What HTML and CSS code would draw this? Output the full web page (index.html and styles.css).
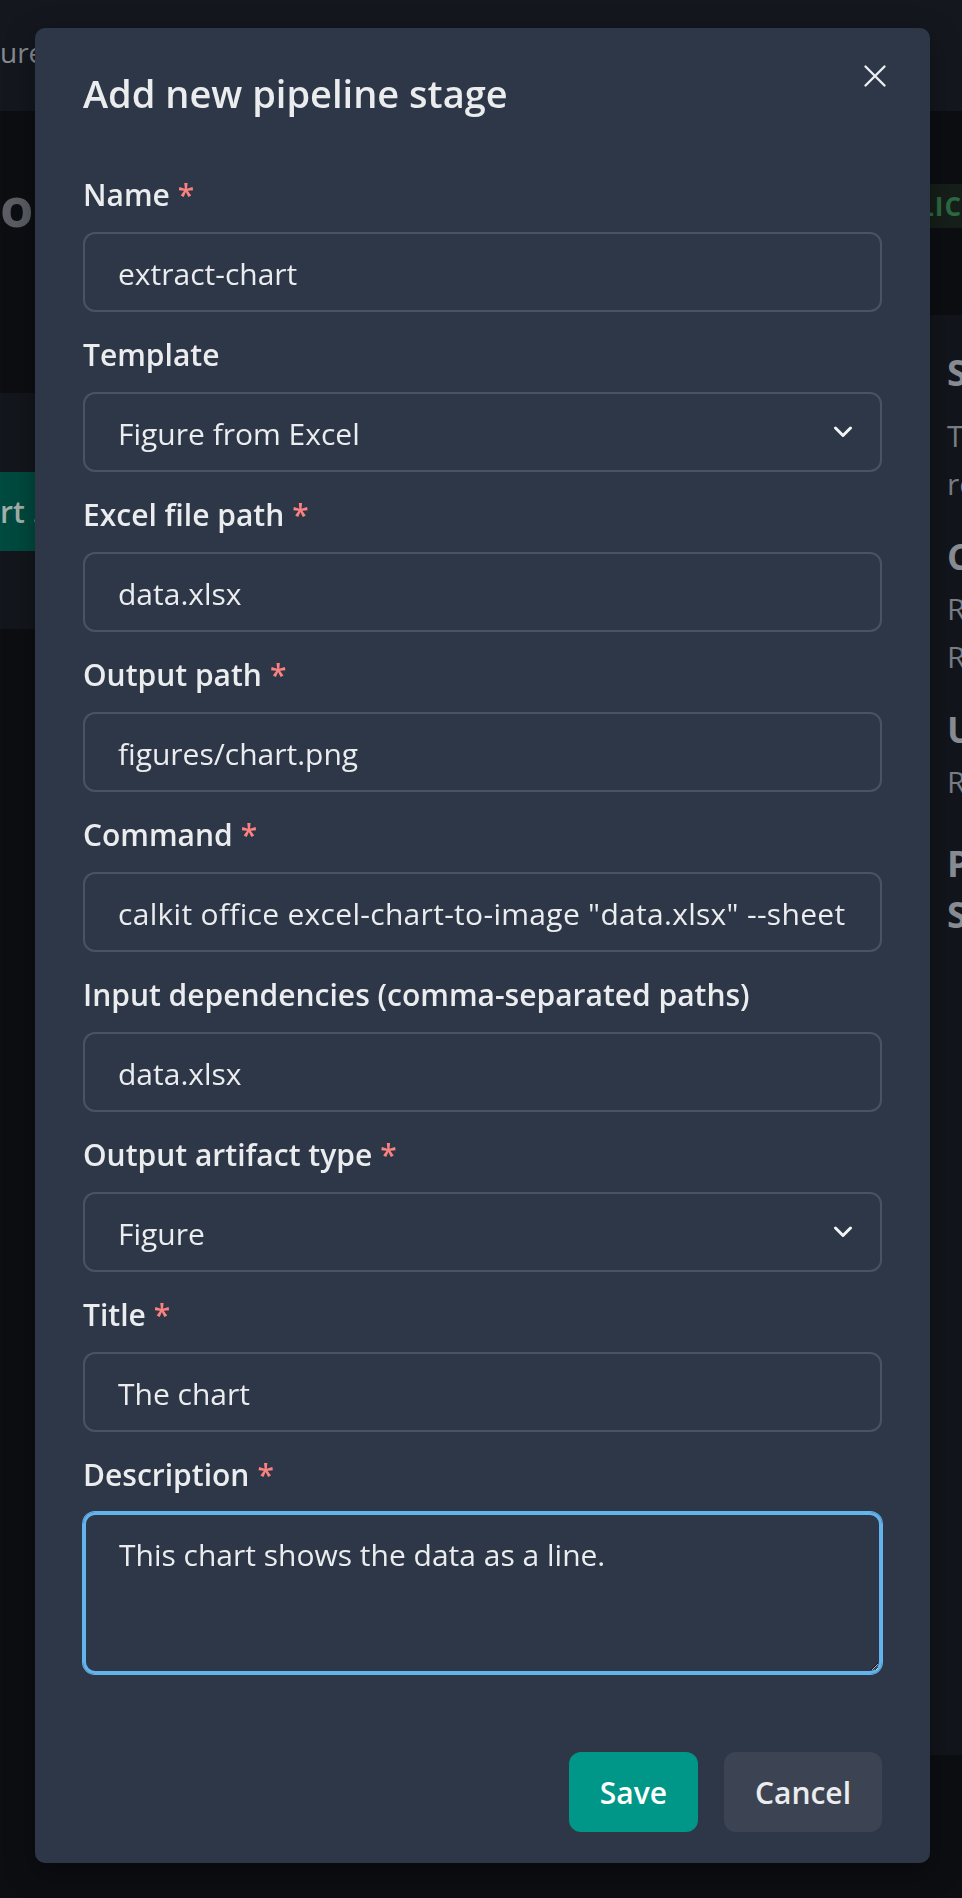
FILE: index.html
```html
<!DOCTYPE html>
<html lang="en">
<head>
<meta charset="utf-8">
<title>Add new pipeline stage</title>
<link rel="stylesheet" href="styles.css">
</head>
<body>
<div class="page">
  <header class="topbar"><span class="crumb">ure</span></header>
  <div class="titlerow">
    <h1 class="page-title">or</h1>
    <span class="badge">PUBLIC</span>
  </div>
  <div class="content">
    <div class="main-col">
      <div class="card">
        <button class="bg-btn" type="button">rt ...</button>
      </div>
    </div>
    <aside class="sidebar">
      <h3 class="side-h side-h-first">Stage details</h3>
      <p class="side-p">The pipeline is<br>recorded in calkit.yaml</p>
      <h3 class="side-h">Commands</h3>
      <p class="side-p">Run the pipeline<br>Run a single stage</p>
      <h3 class="side-h">Usage</h3>
      <p class="side-p side-p-last">Run locally</p>
      <h3 class="side-h side-h-last">Pipeline<br>Stages</h3>
    </aside>
  </div>
</div>

<div class="overlay">
  <div class="modal" role="dialog" aria-labelledby="modal-title">
    <header class="modal-header">
      <h2 class="modal-title" id="modal-title">Add new pipeline stage</h2>
      <button class="close" type="button" aria-label="Close">
        <svg width="24" height="24" viewBox="0 0 24 24" fill="none" stroke="currentColor" stroke-width="2.4" stroke-linecap="round">
          <path d="M2.5 2.5 L21.5 21.5 M21.5 2.5 L2.5 21.5"/>
        </svg>
      </button>
    </header>

    <div class="modal-body">
      <div class="field">
        <label class="label">Name<span class="req">*</span></label>
        <input class="control" type="text" value="extract-chart">
      </div>
      <div class="field">
        <label class="label">Template</label>
        <div class="select-wrap">
          <select class="control select"><option>Figure from Excel</option></select>
          <svg class="chev" width="20" height="12" viewBox="0 0 20 12" fill="none" stroke="currentColor" stroke-width="3" stroke-linecap="round" stroke-linejoin="round"><path d="M2.5 2 L10 9.5 L17.5 2"/></svg>
        </div>
      </div>
      <div class="field">
        <label class="label">Excel file path<span class="req">*</span></label>
        <input class="control" type="text" value="data.xlsx">
      </div>
      <div class="field">
        <label class="label">Output path<span class="req">*</span></label>
        <input class="control" type="text" value="figures/chart.png">
      </div>
      <div class="field">
        <label class="label">Command<span class="req">*</span></label>
        <input class="control control-cmd" type="text" value='calkit office excel-chart-to-image "data.xlsx" --sheet 1 --chart-index 0 --output "figures/chart.png"'>
      </div>
      <div class="field">
        <label class="label">Input dependencies (comma-separated paths)</label>
        <input class="control" type="text" value="data.xlsx">
      </div>
      <div class="field">
        <label class="label">Output artifact type<span class="req">*</span></label>
        <div class="select-wrap">
          <select class="control select"><option>Figure</option></select>
          <svg class="chev" width="20" height="12" viewBox="0 0 20 12" fill="none" stroke="currentColor" stroke-width="3" stroke-linecap="round" stroke-linejoin="round"><path d="M2.5 2 L10 9.5 L17.5 2"/></svg>
        </div>
      </div>
      <div class="field">
        <label class="label">Title<span class="req">*</span></label>
        <input class="control" type="text" value="The chart">
      </div>
      <div class="field">
        <label class="label">Description<span class="req">*</span></label>
        <textarea class="control textarea">This chart shows the data as a line.</textarea>
      </div>
    </div>

    <footer class="modal-footer">
      <button class="btn btn-save" type="button">Save</button>
      <button class="btn btn-cancel" type="button">Cancel</button>
    </footer>
  </div>
</div>
</body>
</html>
```

FILE: styles.css
```css
* { box-sizing: border-box; }

html, body { margin: 0; padding: 0; }

body {
  width: 962px;
  height: 1898px;
  overflow: hidden;
  background: #0c0e12;
  font-family: "Open Sans", "Noto Sans", sans-serif;
  color-scheme: dark;
}

/* ---------- dimmed page behind the dialog ---------- */
.page { width: 962px; }

.topbar {
  height: 111px;
  background: #14171e;
  display: flex;
  align-items: center;
  padding-bottom: 7px;
  white-space: nowrap;
  overflow: hidden;
}

.crumb { color: #878b92; font-size: 28px; line-height: 1; }

.titlerow {
  height: 204px;
  display: flex;
  justify-content: space-between;
  align-items: center;
  padding-bottom: 14px;
  white-space: nowrap;
  overflow: hidden;
}

.page-title {
  margin: 0;
  font-size: 54px;
  font-weight: 700;
  color: #5b5e65;
  line-height: 1;
}

.badge {
  font-size: 26px;
  font-weight: 700;
  color: #2c6a43;
  background: #161f1a;
  padding: 4px 0 4px 10px;
  letter-spacing: 1px;
}

.content {
  display: grid;
  grid-template-columns: 930px 1fr;
  align-items: start;
}

.main-col { padding-top: 78px; }

.card {
  height: 236px;
  background: #13161c;
  padding-top: 79px;
}

.bg-btn {
  display: block;
  height: 79px;
  width: 320px;
  background: #004a3f;
  color: #a3b1ad;
  font: 600 30px "Open Sans", sans-serif;
  border: 0;
  text-align: left;
  padding: 0;
}

.sidebar {
  background: #12151b;
  height: 1440px;
  padding: 34px 0 0 17px;
  white-space: nowrap;
  overflow: hidden;
  color: #7a7e85;
}

.side-h {
  margin: 0 0 4px;
  font-size: 36px;
  line-height: 48px;
  font-weight: 700;
  color: #8a8d93;
}

.side-h-first { margin-bottom: 15px; }

.side-h-last { line-height: 51px; }

.side-p {
  margin: 0 0 25px;
  font-size: 30px;
  line-height: 48px;
}

.side-p-last { margin-bottom: 32px; }

/* ---------- dialog ---------- */
.overlay {
  position: fixed;
  inset: 0;
  display: flex;
  align-items: flex-start;
}

.modal {
  position: relative;
  margin: 28px 0 0 35px;
  width: 895px;
  background: #2d3748;
  border-radius: 10px;
  box-shadow: 0 10px 30px rgba(0, 0, 0, 0.35);
  color: #ebecee;
}

.modal-header { padding: 41px 48px 0; }

.modal-title {
  margin: 0;
  font-size: 38px;
  font-weight: 600;
  line-height: 48px;
  color: #ebecee;
}

.close {
  position: absolute;
  top: 24px;
  right: 31px;
  width: 48px;
  height: 48px;
  padding: 0;
  border: 0;
  background: none;
  color: #eceef0;
  display: flex;
  align-items: center;
  justify-content: center;
}

.modal-body {
  padding: 56px 48px 0;
  display: flex;
  flex-direction: column;
  gap: 21px;
}

.field { display: flex; flex-direction: column; }

.label {
  font-size: 30px;
  font-weight: 600;
  line-height: 40px;
  padding-top: 2px;
  margin-bottom: 17px;
  color: #ebecee;
}

.req { color: #fc8181; margin-left: 8px; }

.control {
  display: block;
  width: 100%;
  height: 80px;
  margin: 0;
  background: transparent;
  border: 2px solid #4b5363;
  border-radius: 12px;
  padding: 3px 33px 0;
  font: 400 30px "Open Sans", sans-serif;
  color: #ebecee;
  outline: none;
}

.control-cmd { letter-spacing: 0.3px; }

.select-wrap { position: relative; }

.select {
  appearance: none;
  -webkit-appearance: none;
  background: transparent;
}

.select option { background: #2d3748; }

.chev {
  position: absolute;
  right: 29px;
  top: 34px;
  color: #f2f3f5;
  pointer-events: none;
}

.textarea {
  height: 162px;
  padding: 19px 33px;
  line-height: 41px;
  border: 3px solid #63b3ed;
  box-shadow: 0 0 0 1px #63b3ed;
  resize: vertical;
}

.modal-footer {
  display: flex;
  justify-content: flex-end;
  gap: 26px;
  padding: 78px 48px 31px;
}

.btn {
  height: 80px;
  padding: 0 31px;
  border: 0;
  border-radius: 12px;
  font: 600 30px "Open Sans", sans-serif;
  color: #ffffff;
}

.btn-save { background: #009688; }

.btn-cancel { background: #3c4453; color: #ebecee; }
```
